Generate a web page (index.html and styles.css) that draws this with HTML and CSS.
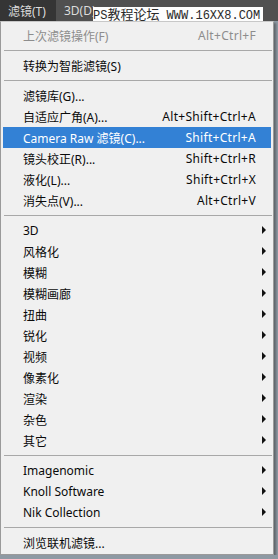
FILE: index.html
```html
<!DOCTYPE html>
<html lang="zh-CN">
<head>
    <meta charset="UTF-8">
    <meta name="viewport" content="width=device-width, initial-scale=1.0">
    <title>滤镜菜单</title>
    <link rel="stylesheet" href="styles.css">
</head>
<body>
    <header class="menubar">
        <span class="menubar-item active">滤镜(T)</span>
        <span class="menubar-item">3D(D)</span>
        <div class="watermark">PS<span class="cjk">教程论坛</span> WWW.16XX8.COM</div>
    </header>

    <ul class="menu">
        <li class="item disabled"><span class="label">上次滤镜操作(F)</span><span class="shortcut">Alt+Ctrl+F</span></li>
        <li class="sep"></li>
        <li class="item"><span class="label">转换为智能滤镜(S)</span></li>
        <li class="sep"></li>
        <li class="item"><span class="label">滤镜库(G)...</span></li>
        <li class="item"><span class="label">自适应广角(A)...</span><span class="shortcut">Alt+Shift+Ctrl+A</span></li>
        <li class="item selected"><span class="label">Camera Raw 滤镜(C)...</span><span class="shortcut">Shift+Ctrl+A</span></li>
        <li class="item"><span class="label">镜头校正(R)...</span><span class="shortcut">Shift+Ctrl+R</span></li>
        <li class="item"><span class="label">液化(L)...</span><span class="shortcut">Shift+Ctrl+X</span></li>
        <li class="item"><span class="label">消失点(V)...</span><span class="shortcut">Alt+Ctrl+V</span></li>
        <li class="sep"></li>
        <li class="item sub"><span class="label">3D</span><span class="arrow"></span></li>
        <li class="item sub"><span class="label">风格化</span><span class="arrow"></span></li>
        <li class="item sub"><span class="label">模糊</span><span class="arrow"></span></li>
        <li class="item sub"><span class="label">模糊画廊</span><span class="arrow"></span></li>
        <li class="item sub"><span class="label">扭曲</span><span class="arrow"></span></li>
        <li class="item sub"><span class="label">锐化</span><span class="arrow"></span></li>
        <li class="item sub"><span class="label">视频</span><span class="arrow"></span></li>
        <li class="item sub"><span class="label">像素化</span><span class="arrow"></span></li>
        <li class="item sub"><span class="label">渲染</span><span class="arrow"></span></li>
        <li class="item sub"><span class="label">杂色</span><span class="arrow"></span></li>
        <li class="item sub"><span class="label">其它</span><span class="arrow"></span></li>
        <li class="sep"></li>
        <li class="item sub"><span class="label">Imagenomic</span><span class="arrow"></span></li>
        <li class="item sub"><span class="label">Knoll Software</span><span class="arrow"></span></li>
        <li class="item sub"><span class="label">Nik Collection</span><span class="arrow"></span></li>
        <li class="sep"></li>
        <li class="item"><span class="label">浏览联机滤镜...</span></li>
    </ul>
</body>
</html>
```

FILE: styles.css
```css
body {
    margin: 0;
    padding: 0;
    background-color: #8e99a3;
    font-family: "Noto Sans", "Noto Sans CJK SC", sans-serif;
    font-size: 12px;
    color: #0a0a0a;
    overflow: hidden;
}

.menubar {
    position: relative;
    height: 21px;
    background-color: #505050;
    display: flex;
    align-items: stretch;
}

.menubar-item {
    display: flex;
    align-items: center;
    padding: 0 8px;
    color: #dcdcdc;
    font-size: 12px;
}

.menubar-item.active {
    background-color: #353535;
    width: 40px;
}

.watermark {
    position: absolute;
    left: 93px;
    top: 7px;
    width: 170px;
    height: 14px;
    background-color: #fdfdfd;
    color: #2a2a2a;
    font-family: "Liberation Mono", "Noto Sans CJK SC", monospace;
    font-size: 12px;
    line-height: 14px;
    white-space: nowrap;
}

.watermark .cjk {
    font-family: "Noto Sans CJK SC", sans-serif;
    font-size: 13px;
}

.menu {
    list-style: none;
    margin: 0;
    padding: 3px 0 1px;
    width: 272px;
    background-color: #f0f0f0;
    border: 1px solid #9a9a9a;
    border-top-color: #c8c8c8;
    box-shadow: 2px 2px 2px rgba(40, 40, 40, 0.45);
}

.item {
    height: 21px;
    display: flex;
    align-items: center;
    margin: 0 2px;
    padding: 0 5px 0 20px;
    white-space: nowrap;
}

.item .label {
    flex: 1;
}

.item .shortcut {
    margin-right: 10px;
    letter-spacing: 0.3px;
}

.item.disabled {
    color: #8d8d8d;
}

.item.selected {
    background-color: #3381d5;
    color: #fff;
}

.arrow {
    width: 0;
    height: 0;
    border-left: 4px solid #111;
    border-top: 4px solid transparent;
    border-bottom: 4px solid transparent;
    margin-top: -2px;
}

.sep {
    height: 1px;
    margin: 4px 1px 4px 3px;
    background-color: #a8a8a8;
}
```
